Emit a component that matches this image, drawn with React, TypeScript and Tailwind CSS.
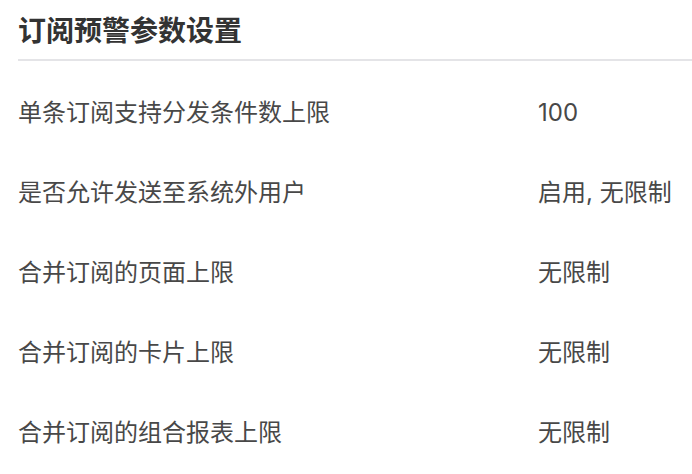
import React from "react";

const rows: [string, string][] = [
  ["单条订阅支持分发条件数上限", "100"],
  ["是否允许发送至系统外用户", "启用, 无限制"],
  ["合并订阅的页面上限", "无限制"],
  ["合并订阅的卡片上限", "无限制"],
  ["合并订阅的组合报表上限", "无限制"],
];

export default function App() {
  return (
    <div
      className="w-[692px] h-[474px] bg-white overflow-hidden pl-[18px]"
      style={{ fontFamily: 'Inter, "Noto Sans CJK SC", sans-serif' }}
    >
      <h1 className="pt-[11px] h-[52px] text-[28px] leading-[40px] font-bold text-[#333333]">
        订阅预警参数设置
      </h1>
      <div className="mt-[7px] h-[2px] bg-[#e4e4e7]" />
      <div className="mt-[12px] flex flex-col">
        {rows.map(([k, v]) => (
          <div key={k} className="h-[80px] grid grid-cols-[520px_1fr] items-center text-[24px] leading-[32px] text-[#484848]">
            <span>{k}</span>
            <span>{v}</span>
          </div>
        ))}
      </div>
    </div>
  );
}
